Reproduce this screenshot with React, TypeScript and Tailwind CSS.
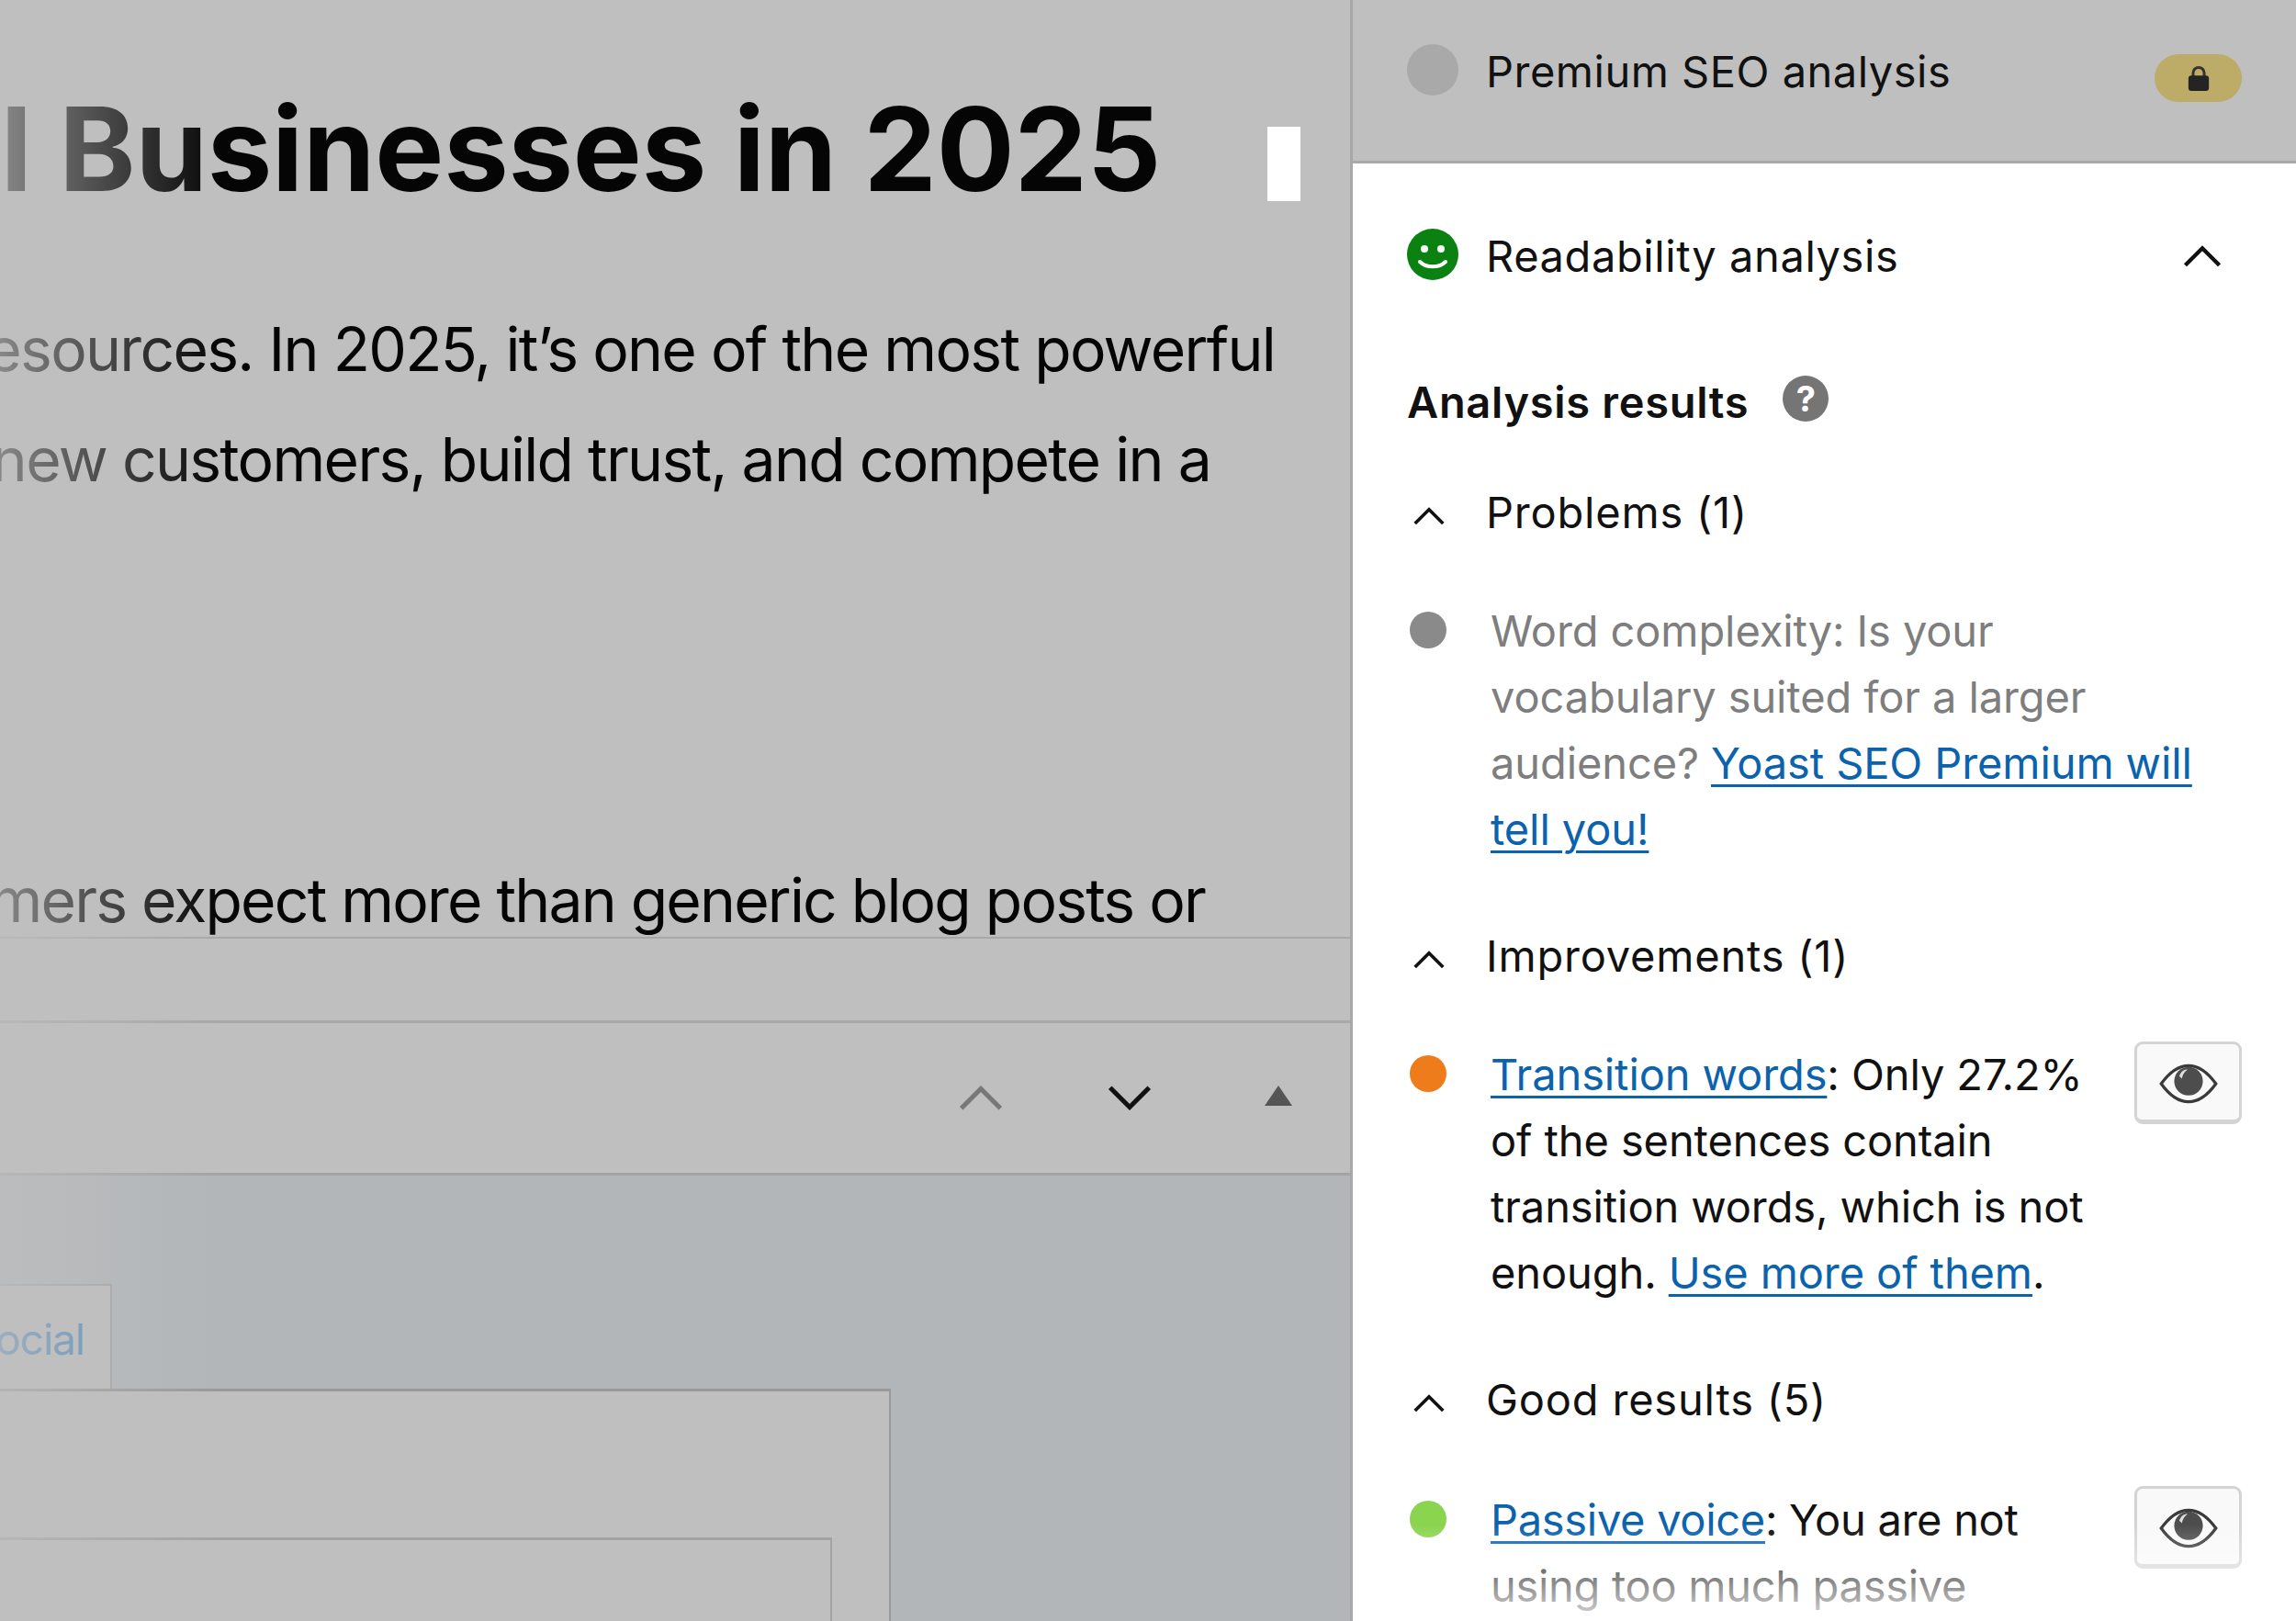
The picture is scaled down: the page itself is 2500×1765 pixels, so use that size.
import type { ReactNode } from "react";

function Chevron({ className, up = true }: { className: string; up?: boolean }) {
  return (
    <svg viewBox="0 0 40 22" fill="none" stroke="currentColor" strokeWidth="4" className={className}>
      <path d={up ? "M3 20 L20 3 L37 20" : "M3 2 L20 19 L37 2"} />
    </svg>
  );
}

function Eye() {
  return (
    <svg viewBox="0 0 70 48" className="w-[66px] h-[44px]">
      <path d="M2.5 24 C14 8 24 2.5 35 2.5 C46 2.5 56 8 67.5 24 C56 40 46 45.5 35 45.5 C24 45.5 14 40 2.5 24 Z" fill="none" stroke="#3a3a3a" strokeWidth="3.5" />
      <circle cx="35" cy="21" r="17" fill="#4d4d4d" />
      <path d="M24 15 C26 9 30 7 34 7 C30 10 28 13 27 18 Z" fill="#dddddd" />
    </svg>
  );
}

function EyeButton() {
  return (
    <div className="shrink-0 w-[117px] h-[90px] pt-[3px] rounded-[9px] border-[3px] border-b-[5px] border-[#d2d4d5] bg-[#f9f9f9] flex items-center justify-center">
      <Eye />
    </div>
  );
}

function Dot({ color }: { color: string }) {
  return (
    <div className="w-[91px] shrink-0 h-[72px] flex items-center">
      <div className={`w-[40px] h-[40px] rounded-full ml-[3px] -mt-[2px] ${color}`} />
    </div>
  );
}

function GroupHeader({ children, className }: { children: ReactNode; className: string }) {
  return (
    <div className={`flex items-center h-[72px] text-[#111] tracking-[0.8px] ${className}`}>
      <div className="w-[86px] shrink-0 pt-[8px]">
        <Chevron className="w-[36px] h-[20px] ml-[6px]" />
      </div>
      <span>{children}</span>
    </div>
  );
}

function Link({ children }: { children: ReactNode }) {
  return <a className="text-[#0b62ad] underline decoration-[3px] underline-offset-[6px]">{children}</a>;
}

function SidePanel() {
  return (
    <div className="relative w-[1030px] h-full overflow-hidden border-l-[3px] border-[#a8a8a8] bg-white font-['Inter',sans-serif] text-[47px] tracking-[-0.1px]">
      <div className="h-[178px] bg-[#bfbfbf] border-b-[3px] border-[#a9a9a9] flex items-start pl-[59px] pr-[59px] pt-[48px]">
        <div className="w-[56px] h-[56px] rounded-full bg-[#a9a9a9] shrink-0" />
        <span className="ml-[30px] text-[#111] leading-[60px] tracking-[0.5px]">Premium SEO analysis</span>
        <div className="ml-auto mt-[11px] w-[95px] h-[52px] rounded-full bg-[#bdab68] flex items-center justify-center">
          <svg viewBox="0 0 28 32" className="w-[26px] h-[30px]">
            <path d="M7.5 15 V10 a6.5 6.5 0 0 1 13 0 V15" fill="none" stroke="#333" strokeWidth="3.2" />
            <rect x="2" y="13" width="24" height="18" rx="3.5" fill="#242424" />
          </svg>
        </div>
      </div>

      <div className="pl-[59px] pr-[59px]">
        <div className="mt-[65px] h-[72px] flex items-center text-[#111]">
          <svg viewBox="0 0 56 56" className="w-[56px] h-[56px] shrink-0 -mt-[4px]">
            <circle cx="28" cy="28" r="28" fill="#0b8111" />
            <circle cx="19" cy="22" r="4" fill="#fff" />
            <circle cx="37" cy="22" r="4" fill="#fff" />
            <path d="M14 36 C21 43 35 43 42 36" fill="none" stroke="#fff" strokeWidth="4" strokeLinecap="round" />
          </svg>
          <span className="ml-[30px] tracking-[0.6px]">Readability analysis</span>
          <Chevron className="ml-auto mr-[21px] w-[44px] h-[24px]" />
        </div>

        <div className="mt-[87px] h-[72px] flex items-center">
          <span className="font-semibold tracking-[0.7px] text-[#111]">Analysis results</span>
          <div className="ml-[37px] -mt-[8px] w-[50px] h-[50px] rounded-full bg-[#757575] text-white font-bold text-[38px] flex items-center justify-center">?</div>
        </div>

        <GroupHeader className="mt-[48px]">Problems (1)</GroupHeader>

        <div className="mt-[57px] flex leading-[72px]">
          <Dot color="bg-[#8a8a8a]" />
          <p className="w-[780px] text-[#7e7e7e]">
            Word complexity: Is your vocabulary suited for a larger audience? <Link>Yoast SEO Premium will tell you!</Link>
          </p>
        </div>

        <GroupHeader className="mt-[66px]">Improvements (1)</GroupHeader>

        <div className="mt-[57px] flex leading-[72px] text-[#111]">
          <Dot color="bg-[#ee7c1b]" />
          <p className="w-[665px]">
            <Link>Transition words</Link>: Only 27.2% of the sentences contain transition words, which is not enough. <Link>Use more of them</Link>.
          </p>
          <div className="ml-auto">
            <EyeButton />
          </div>
        </div>

        <GroupHeader className="mt-[66px]">Good results (5)</GroupHeader>

        <div className="mt-[59px] flex leading-[72px] text-[#111] tracking-[-0.3px]">
          <Dot color="bg-[#8bd450]" />
          <p className="w-[640px]">
            <Link>Passive voice</Link>: You are not using too much passive
          </p>
          <div className="ml-auto -mt-[1px]">
            <EyeButton />
          </div>
        </div>
      </div>

      <div className="absolute left-0 right-0 bottom-0 h-[105px] bg-gradient-to-b from-white/0 to-white/85" />
    </div>
  );
}

function EditorPane() {
  return (
    <div className="relative w-[1470px] h-full overflow-hidden bg-[#bfbfbf] font-['Inter',sans-serif] text-[#050505]">
      <div className="h-[320px] flex justify-end items-start pr-[54px]">
        <h1 className="mt-[93px] text-[126px] leading-[138px] font-bold tracking-[-0.2px] whitespace-nowrap">
          l Businesses in 2025
        </h1>
        <div className="w-[36px] h-[81px] bg-white mt-[138px] ml-[116px] shrink-0" />
      </div>
      <div className="text-[66px] leading-[120px] tracking-[-1.7px] whitespace-nowrap">
        <p className="flex justify-end pr-[82px]">esources. In 2025, it’s one of the most powerful</p>
        <p className="flex justify-end pr-[152px]">new customers, build trust, and compete in a</p>
      </div>
      <div className="h-[360px]" />
      <div className="h-[102px] overflow-hidden border-b-[2px] border-[#a8a8a8] text-[66px] tracking-[-1.8px] leading-[120px] whitespace-nowrap">
        <p className="flex justify-end pr-[158px]">mers expect more than generic blog posts or</p>
      </div>
      <div className="h-[92px] border-b-[3px] border-[#a8a8a8]" />
      <div className="h-[166px] border-b-[3px] border-[#a4a4a4] flex items-center justify-end pr-[63px]">
        <Chevron up className="w-[50px] h-[29px] text-[#777]" />
        <Chevron up={false} className="w-[50px] h-[29px] ml-[112px] text-[#111]" />
        <svg viewBox="0 0 30 22" className="w-[30px] h-[22px] ml-[122px] -mt-[5px]">
          <path d="M15 0 L30 22 L0 22 Z" fill="#555" />
        </svg>
      </div>
      <div className="h-[487px] bg-[#b2b6b9]">
        <div className="pt-[118px] w-[122px]">
          <div className="h-[114px] pt-[5px] border-r-[2px] border-t-[2px] border-[#a3a3a3] bg-[#bfbfbf] flex items-center justify-end pr-[28px] text-[46px] tracking-[-1px] text-[#4a86bd]">
            <span className="whitespace-nowrap">Social</span>
          </div>
        </div>
        <div className="w-[970px] h-[256px] border-r-[2px] border-t-[3px] border-[#999] bg-[#bfbfbf] pt-[159px] pr-[62px]">
          <div className="h-[94px] border-r-[2px] border-t-[3px] border-[#a3a3a3] bg-[#bfbfbf]" />
        </div>
      </div>
      <div className="absolute inset-y-0 left-0 w-[240px] bg-gradient-to-r from-[#bfbfbf]/70 to-transparent" />
    </div>
  );
}

export default function App() {
  return (
    <div className="flex w-[2500px] h-[1765px] overflow-hidden">
      <EditorPane />
      <SidePanel />
    </div>
  );
}
